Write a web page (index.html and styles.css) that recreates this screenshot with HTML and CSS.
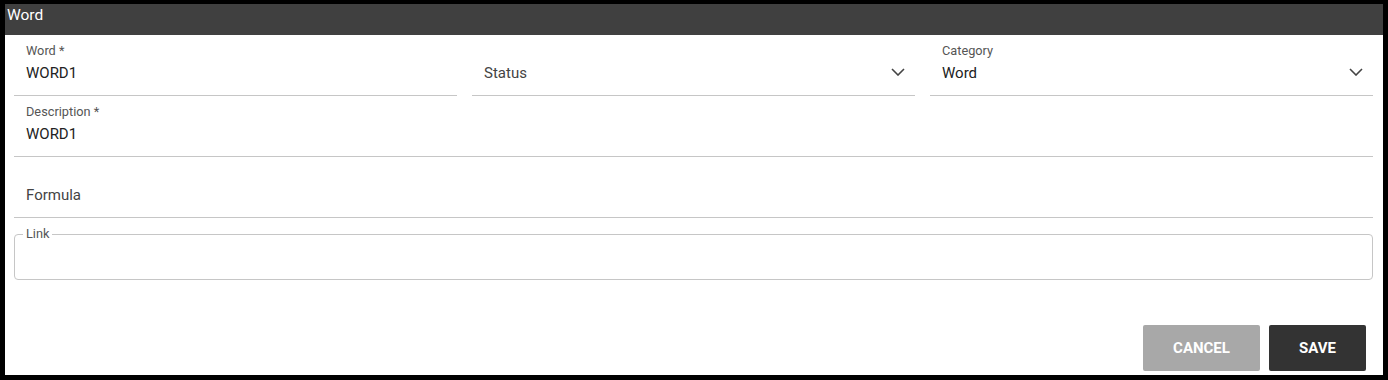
FILE: index.html
```html
<!DOCTYPE html>
<html lang="en">
<head>
<meta charset="utf-8">
<title>Word</title>
<link rel="stylesheet" href="styles.css">
</head>
<body>
<div class="dialog">
  <div class="dialog-header">Word</div>
  <form class="dialog-body">
    <div class="row row-3">
      <div class="field">
        <div class="label">Word *</div>
        <div class="value">WORD1</div>
      </div>
      <div class="field select">
        <div class="label"></div>
        <div class="value placeholder">Status</div>
        <svg class="chevron" width="14" height="8" viewBox="0 0 14 8"><path d="M1 1l6 6 6-6" fill="none" stroke="#444" stroke-width="1.6"/></svg>
      </div>
      <div class="field select">
        <div class="label">Category</div>
        <div class="value">Word</div>
        <svg class="chevron" width="14" height="8" viewBox="0 0 14 8"><path d="M1 1l6 6 6-6" fill="none" stroke="#444" stroke-width="1.6"/></svg>
      </div>
    </div>
    <div class="field">
      <div class="label">Description *</div>
      <div class="value">WORD1</div>
    </div>
    <div class="field">
      <div class="label"></div>
      <div class="value placeholder">Formula</div>
    </div>
    <fieldset class="outlined">
      <legend>Link</legend>
    </fieldset>
    <div class="actions">
      <button type="button" class="btn btn-cancel">CANCEL</button>
      <button type="button" class="btn btn-save">SAVE</button>
    </div>
  </form>
</div>
</body>
</html>
```
FILE: styles.css
```css
html, body {
  margin: 0;
  padding: 0;
  background: #000;
  font-family: Roboto, "Liberation Sans", sans-serif;
}
.dialog {
  margin: 4px 5px 0 5px;
  height: 371px;
  background: #fff;
  display: flex;
  flex-direction: column;
}
.dialog-header {
  height: 31px;
  background: #404040;
  color: #fff;
  font-size: 15.5px;
  line-height: 22px;
  padding: 0 2px;
  box-sizing: border-box;
}
.dialog-body {
  flex: 1;
  display: flex;
  flex-direction: column;
  padding: 0 10px 4px 9px;
  margin: 0;
}
.row-3 {
  display: grid;
  grid-template-columns: 1fr 1fr 1fr;
  column-gap: 15px;
}
.field {
  position: relative;
  padding: 9px 12px 11px;
  border-bottom: 1px solid #c6c6c6;
  display: flex;
  flex-direction: column;
  gap: 4px;
}
.label {
  font-size: 12.75px;
  line-height: 14px;
  height: 14px;
  color: #555;
}
.value {
  font-size: 15px;
  line-height: 22px;
  color: #222;
}
.placeholder {
  color: #444;
}
.chevron {
  position: absolute;
  right: 10px;
  top: 37px;
  transform: translateY(-50%);
}
.outlined {
  margin: 10px 0 0 0;
  height: 52px;
  box-sizing: border-box;
  border: 1px solid #c6c6c6;
  border-radius: 4px;
  padding: 0 10px;
}
.outlined legend {
  font-size: 12.75px;
  line-height: 12px;
  color: #555;
  padding: 0 3px;
  margin-left: -2px;
}
.actions {
  margin-top: auto;
  display: flex;
  justify-content: flex-end;
  gap: 9px;
  padding-right: 7px;
}
.btn {
  height: 46px;
  border: none;
  border-radius: 2px;
  color: #fff;
  font-family: Roboto, "Liberation Sans", sans-serif;
  font-size: 15px;
  font-weight: 700;
  cursor: pointer;
}
.btn-cancel {
  width: 117px;
  background: #a8a8a8;
}
.btn-save {
  width: 97px;
  background: #333;
}
```
